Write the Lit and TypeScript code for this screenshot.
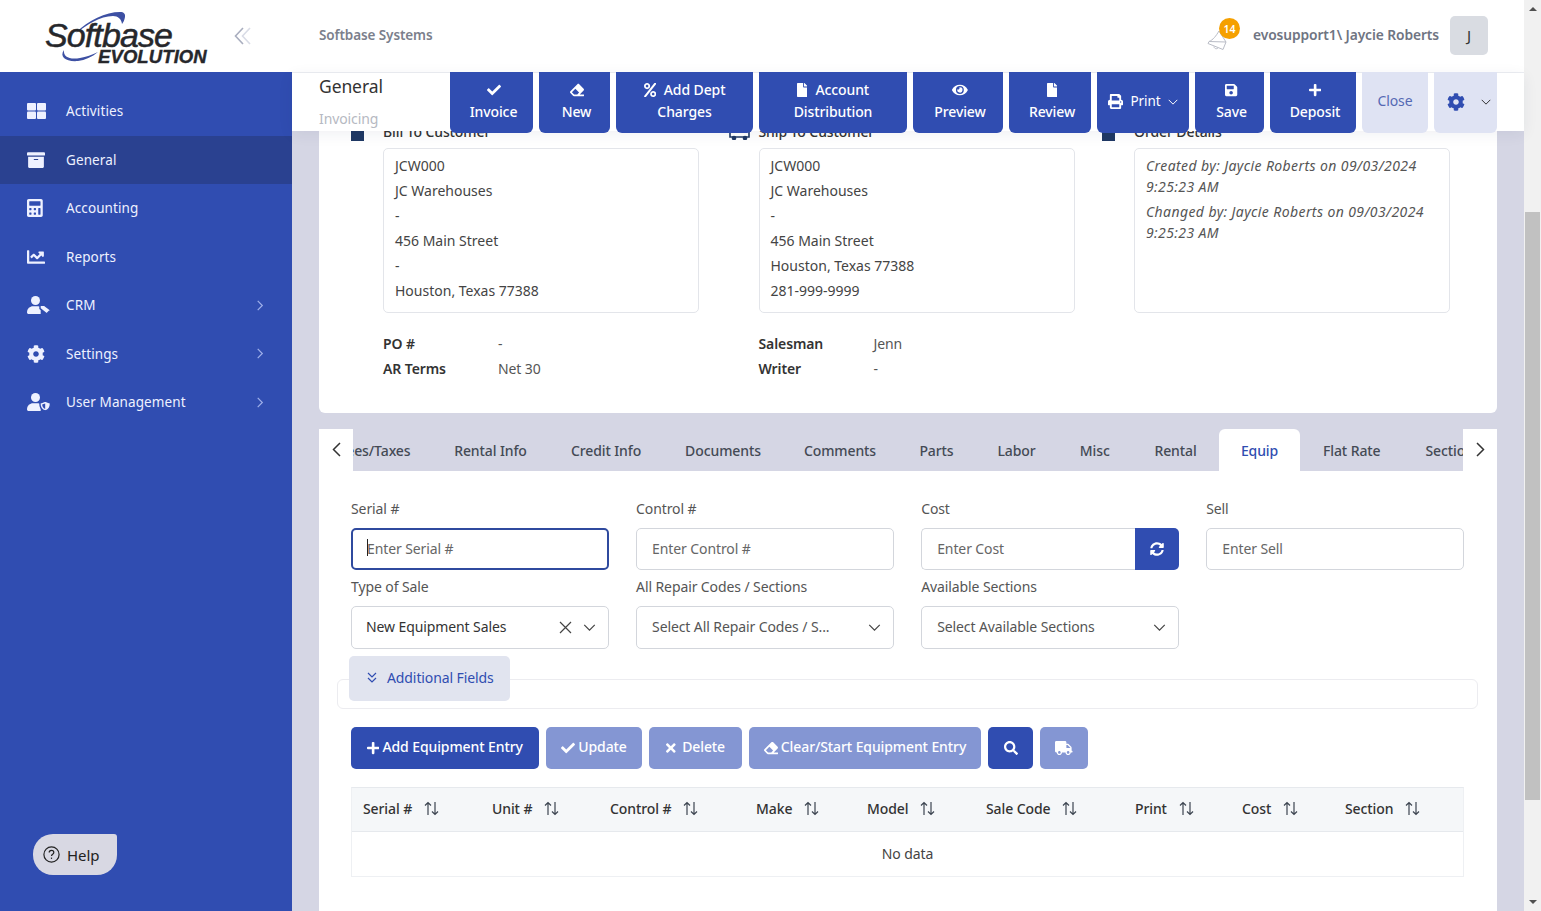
import { LitElement, html, css, svg } from "lit";
import { customElement } from "lit/decorators.js";

const fa = (w: number, d: string, cls = "") =>
  html`<svg class="fa ${cls}" viewBox="0 0 ${w} 512" fill="currentColor"><path d=${d}></path></svg>`;

const P = {
  check: "M173.898 439.404l-166.4-166.4c-9.997-9.997-9.997-26.206 0-36.204l36.203-36.204c9.997-9.998 26.207-9.998 36.204 0L192 312.69 432.095 72.596c9.997-9.997 26.207-9.997 36.204 0l36.203 36.204c9.997 9.997 9.997 26.206 0 36.204l-294.4 294.401c-9.998 9.997-26.207 9.997-36.204-.001z",
  plus: "M416 208H272V64c0-17.67-14.33-32-32-32h-32c-17.67 0-32 14.33-32 32v144H32c-17.67 0-32 14.33-32 32v32c0 17.67 14.33 32 32 32h144v144c0 17.67 14.33 32 32 32h32c17.67 0 32-14.33 32-32V304h144c17.67 0 32-14.33 32-32v-32c0-17.67-14.33-32-32-32z",
  times: "M242.72 256l100.07-100.07c12.28-12.28 12.28-32.19 0-44.48l-22.24-22.24c-12.28-12.28-32.19-12.28-44.48 0L176 189.28 75.93 89.21c-12.28-12.28-32.19-12.28-44.48 0L9.21 111.45c-12.28 12.28-12.28 32.19 0 44.48L109.28 256 9.21 356.07c-12.28 12.28-12.28 32.19 0 44.48l22.24 22.24c12.28 12.28 32.2 12.28 44.48 0L176 322.72l100.07 100.07c12.28 12.28 32.2 12.28 44.48 0l22.24-22.24c12.28-12.28 12.28-32.19 0-44.48L242.72 256z",
  search: "M505 442.7L405.3 343c-4.5-4.5-10.6-7-17-7H372c27.6-35.3 44-79.7 44-128C416 93.1 322.9 0 208 0S0 93.1 0 208s93.1 208 208 208c48.3 0 92.7-16.4 128-44v16.3c0 6.4 2.5 12.5 7 17l99.7 99.7c9.4 9.4 24.6 9.4 33.9 0l28.3-28.3c9.4-9.4 9.4-24.6.1-34zM208 336c-70.7 0-128-57.2-128-128 0-70.7 57.2-128 128-128 70.7 0 128 57.2 128 128 0 70.7-57.2 128-128 128z",
  file: "M224 136V0H24C10.7 0 0 10.7 0 24v464c0 13.3 10.7 24 24 24h336c13.3 0 24-10.7 24-24V160H248c-13.2 0-24-10.8-24-24zm160-14.1v6.1H256V0h6.1c6.4 0 12.5 2.5 17 7l97.9 98c4.5 4.5 7 10.6 7 16.9z",
  eye: "M572.52 241.4C518.29 135.59 410.93 64 288 64S57.68 135.64 3.48 241.41a32.35 32.35 0 0 0 0 29.19C57.71 376.41 165.07 448 288 448s230.32-71.64 284.52-177.41a32.35 32.35 0 0 0 0-29.19zM288 400a144 144 0 1 1 144-144 143.93 143.93 0 0 1-144 144zm0-240a95.31 95.31 0 0 0-25.31 3.79 47.85 47.85 0 0 1-66.9 66.9A95.78 95.78 0 1 0 288 160z",
  save: "M433.941 129.941l-83.882-83.882A48 48 0 0 0 316.118 32H48C21.49 32 0 53.49 0 80v352c0 26.51 21.49 48 48 48h352c26.51 0 48-21.49 48-48V163.882a48 48 0 0 0-14.059-33.941zM224 416c-35.346 0-64-28.654-64-64 0-35.346 28.654-64 64-64s64 28.654 64 64c0 35.346-28.654 64-64 64zm96-304.52V212c0 6.627-5.373 12-12 12H76c-6.627 0-12-5.373-12-12V108c0-6.627 5.373-12 12-12h228.52c3.183 0 6.235 1.264 8.485 3.515l3.48 3.48A11.996 11.996 0 0 1 320 111.48z",
  print: "M448 192V77.25c0-8.49-3.37-16.62-9.37-22.63L393.37 9.37c-6-6-14.14-9.37-22.63-9.37H96C78.33 0 64 14.33 64 32v160c-35.35 0-64 28.65-64 64v112c0 8.84 7.16 16 16 16h48v96c0 17.67 14.33 32 32 32h320c17.67 0 32-14.33 32-32v-96h48c8.84 0 16-7.16 16-16V256c0-35.35-28.65-64-64-64zm-64 256H128v-96h256v96zm0-224H128V64h192v48c0 8.84 7.16 16 16 16h48v96zm48 72c-13.25 0-24-10.75-24-24 0-13.26 10.75-24 24-24s24 10.74 24 24c0 13.25-10.75 24-24 24z",
  cog: "M487.4 315.7l-42.6-24.6c4.3-23.2 4.3-47 0-70.2l42.6-24.6c4.9-2.8 7.1-8.6 5.5-14-11.1-35.6-30-67.8-54.7-94.6-3.8-4.1-10-5.1-14.8-2.3L380.8 110c-17.9-15.4-38.5-27.3-60.8-35.1V25.8c0-5.6-3.9-10.5-9.4-11.7-36.7-8.2-74.3-7.8-109.2 0-5.5 1.2-9.4 6.1-9.4 11.7V75c-22.2 7.9-42.8 19.8-60.8 35.1L88.7 85.5c-4.9-2.8-11-1.9-14.8 2.3-24.7 26.7-43.6 58.9-54.7 94.6-1.7 5.4.6 11.2 5.5 14L67.3 221c-4.3 23.2-4.3 47 0 70.2l-42.6 24.6c-4.9 2.8-7.1 8.6-5.5 14 11.1 35.6 30 67.8 54.7 94.6 3.8 4.1 10 5.1 14.8 2.3l42.6-24.6c17.9 15.4 38.5 27.3 60.8 35.1v49.2c0 5.6 3.9 10.5 9.4 11.7 36.7 8.2 74.3 7.8 109.2 0 5.5-1.2 9.4-6.1 9.4-11.7v-49.2c22.2-7.9 42.8-19.8 60.8-35.1l42.6 24.6c4.9 2.8 11 1.9 14.8-2.3 24.7-26.7 43.6-58.9 54.7-94.6 1.5-5.5-.7-11.3-5.6-14.1zM256 336c-44.1 0-80-35.9-80-80s35.9-80 80-80 80 35.9 80 80-35.9 80-80 80z",
  eraser: "M497.941 273.941c18.745-18.745 18.745-49.137 0-67.882l-160-160c-18.745-18.745-49.136-18.746-67.883 0l-256 256c-18.745 18.745-18.745 49.137 0 67.882l96 96A48.004 48.004 0 0 0 144 480h356c6.627 0 12-5.373 12-12v-40c0-6.627-5.373-12-12-12H355.883l142.058-142.059zm-302.627-62.627l137.373 137.373L265.373 416H150.628l-80-80 124.686-124.686z",
  sync: "M370.72 133.28C339.458 104.008 298.888 87.962 255.848 88c-77.458.068-144.328 53.178-162.791 126.85-1.344 5.363-6.122 9.15-11.651 9.15H24.103c-7.498 0-13.194-6.807-11.807-14.176C33.933 94.924 134.813 8 256 8c66.448 0 126.791 26.136 171.315 68.685L463.03 40.97C478.149 25.851 504 36.559 504 57.941V192c0 13.255-10.745 24-24 24H345.941c-21.382 0-32.09-25.851-16.971-40.971l41.75-41.749zM32 296h134.059c21.382 0 32.09 25.851 16.971 40.971l-41.75 41.75c31.262 29.273 71.835 45.319 114.876 45.28 77.418-.07 144.315-53.144 162.787-126.849 1.344-5.363 6.122-9.15 11.651-9.15h57.304c7.498 0 13.194 6.807 11.807 14.176C478.067 417.076 377.187 504 256 504c-66.448 0-126.791-26.136-171.315-68.685L48.97 471.03C33.851 486.149 8 475.441 8 454.059V320c0-13.255 10.745-24 24-24z",
  percent: "M112 224c61.9 0 112-50.1 112-112S173.9 0 112 0 0 50.1 0 112s50.1 112 112 112zm0-160c26.5 0 48 21.5 48 48s-21.5 48-48 48-48-21.5-48-48 21.5-48 48-48zm224 224c-61.9 0-112 50.1-112 112s50.1 112 112 112 112-50.1 112-112-50.1-112-112-112zm0 160c-26.5 0-48-21.5-48-48s21.5-48 48-48 48 21.5 48 48-21.5 48-48 48zM392.3.2l31.6.1c19.4.1 30.8 21.8 19.7 37.8L77.4 501.6a23.95 23.95 0 0 1-19.6 10.2l-33.4-.1c-19.5 0-30.9-21.9-19.7-37.8l368-463.7C377.2 4 384.5.2 392.3.2z",
  truck: "M624 352h-16V243.9c0-12.7-5.1-24.9-14.1-33.9L494 110.1c-9-9-21.2-14.1-33.9-14.1H416V48c0-26.5-21.5-48-48-48H48C21.5 0 0 21.5 0 48v320c0 26.5 21.5 48 48 48h16c0 53 43 96 96 96s96-43 96-96h128c0 53 43 96 96 96s96-43 96-96h48c8.8 0 16-7.2 16-16v-32c0-8.8-7.2-16-16-16zM160 464c-26.5 0-48-21.5-48-48s21.5-48 48-48 48 21.5 48 48-21.5 48-48 48zm320 0c-26.5 0-48-21.5-48-48s21.5-48 48-48 48 21.5 48 48-21.5 48-48 48zm80-208H416V144h44.1l99.9 99.9V256z",
  archive: "M32 448c0 17.7 14.3 32 32 32h384c17.7 0 32-14.3 32-32V160H32v288zm160-212c0-6.6 5.4-12 12-12h104c6.6 0 12 5.4 12 12v8c0 6.6-5.4 12-12 12H204c-6.6 0-12-5.4-12-12v-8zM480 32H32C14.3 32 0 46.3 0 64v48c0 8.8 7.2 16 16 16h480c8.8 0 16-7.2 16-16V64c0-17.7-14.3-32-32-32z",
  calc: "M400 0H48C22.4 0 0 22.4 0 48v416c0 25.6 22.4 48 48 48h352c25.6 0 48-22.4 48-48V48c0-25.6-22.4-48-48-48zM128 435.2c0 6.4-6.4 12.8-12.8 12.8H76.8c-6.4 0-12.8-6.4-12.8-12.8v-38.4c0-6.4 6.4-12.8 12.8-12.8h38.4c6.4 0 12.8 6.4 12.8 12.8v38.4zm0-128c0 6.4-6.4 12.8-12.8 12.8H76.8c-6.4 0-12.8-6.4-12.8-12.8v-38.4c0-6.4 6.4-12.8 12.8-12.8h38.4c6.4 0 12.8 6.4 12.8 12.8v38.4zm128 128c0 6.4-6.4 12.8-12.8 12.8h-38.4c-6.4 0-12.8-6.4-12.8-12.8v-38.4c0-6.4 6.4-12.8 12.8-12.8h38.4c6.4 0 12.8 6.4 12.8 12.8v38.4zm0-128c0 6.4-6.4 12.8-12.8 12.8h-38.4c-6.4 0-12.8-6.4-12.8-12.8v-38.4c0-6.4 6.4-12.8 12.8-12.8h38.4c6.4 0 12.8 6.4 12.8 12.8v38.4zm128 128c0 6.4-6.4 12.8-12.8 12.8h-38.4c-6.4 0-12.8-6.4-12.8-12.8V268.8c0-6.4 6.4-12.8 12.8-12.8h38.4c6.4 0 12.8 6.4 12.8 12.8v166.4zm0-256c0 6.4-6.4 12.8-12.8 12.8H76.8c-6.4 0-12.8-6.4-12.8-12.8V76.8C64 70.4 70.4 64 76.8 64h294.4c6.4 0 12.8 6.4 12.8 12.8v102.4z",
  chart: "M496 384H64V80c0-8.84-7.16-16-16-16H16C7.16 64 0 71.16 0 80v336c0 17.67 14.33 32 32 32h464c8.84 0 16-7.16 16-16v-32c0-8.84-7.16-16-16-16zM464 96H345.94c-21.38 0-32.09 25.85-16.97 40.97l32.4 32.4L288 242.75l-73.37-73.37c-12.5-12.5-32.76-12.5-45.25 0l-68.69 68.69c-6.25 6.25-6.25 16.38 0 22.63l22.62 22.62c6.25 6.25 16.38 6.25 22.63 0L192 237.25l73.37 73.37c12.5 12.5 32.76 12.5 45.25 0l96-96 32.4 32.4c15.12 15.12 40.97 4.41 40.97-16.97V112c.01-8.84-7.15-16-15.99-16z",
};

const gridIcon = html`<svg class="nav-ic grid" viewBox="0 0 19 16" fill="currentColor"><rect x="0" y="0" width="9" height="7.4" rx="1"></rect><rect x="10" y="0" width="9" height="7.4" rx="1"></rect><rect x="0" y="8.6" width="9" height="7.4" rx="1"></rect><rect x="10" y="8.6" width="9" height="7.4" rx="1"></rect></svg>`;

const person = svg`<circle cx="8.5" cy="4.5" r="4.5"></circle><path d="M0 16.5C0 12.5 3 10.3 6 10.3h5c1 0 2 .3 2.7.7V18H1.700C.7 18 0 17.4 0 16.5z"></path>`;
const userTag = html`<svg class="nav-ic" viewBox="0 0 24 18" fill="currentColor">${person}<path d="M13 9.200h4.200l6.300 4.800-3.900 3.900-6.600-5.300z" stroke="#304db1" stroke-width="1.400"></path></svg>`;
const userShield = html`<svg class="nav-ic" viewBox="0 0 24 18" fill="currentColor">${person}<path d="M18.200 8.200l5.300 2c0 4-1.500 6.800-5.300 7.800-3.800-1-5.300-3.800-5.300-7.800z" stroke="#304db1" stroke-width="1.400"></path><path d="M18.200 10.500v5.600c-2-.8-2.900-2.600-3-4.500z" fill="#304db1"></path></svg>`;

const chevR = html`<svg class="caret" viewBox="0 0 8 12" fill="none" stroke="currentColor" stroke-width="1.3"><path d="M1.500 1l5 5-5 5"></path></svg>`;
const chevD = html`<svg class="chev" viewBox="0 0 14 8" fill="none" stroke="currentColor" stroke-width="1.400"><path d="M1 1l6 6 6-6"></path></svg>`;
const sort = html`<svg class="sort" viewBox="0 0 15 15" fill="none" stroke="currentColor" stroke-width="1.200"><path d="M4 14V1.500M1 4.500l3-3 3 3M11 1v12.500M8 10.500l3 3 3-3"></path></svg>`;

const NAV = [
  { label: "Activities", icon: gridIcon },
  { label: "General", icon: fa(512, P.archive, "nav-ic"), active: true },
  { label: "Accounting", icon: fa(448, P.calc, "nav-ic") },
  { label: "Reports", icon: fa(512, P.chart, "nav-ic") },
  { label: "CRM", icon: userTag, more: true },
  { label: "Settings", icon: fa(512, P.cog, "nav-ic"), more: true },
  { label: "User Management", icon: userShield, more: true },
];

const TABS = ["Fees/Taxes", "Rental Info", "Credit Info", "Documents", "Comments", "Parts", "Labor", "Misc", "Rental", "Equip", "Flat Rate", "Sections"];
const COLS = ["Serial #", "Unit #", "Control #", "Make", "Model", "Sale Code", "Print", "Cost", "Section"];

@customElement("app-root")
export class AppRoot extends LitElement {
  static styles = css`
    :host {
      display: block;
      height: 911px;
      overflow: hidden;
      font-family: "Noto Sans", sans-serif;
      font-size: 14px;
      color: #333;
      letter-spacing: -0.1px;
    }
    * { box-sizing: border-box; }
    .app {
      display: grid;
      grid-template-columns: 292px 1fr 17px;
      height: 100%;
      background: #d5d6e4;
    }
    .fa { height: 14px; width: auto; display: block; flex: none; }

    /* sidebar */
    .side {
      background: #304db1;
      display: flex;
      flex-direction: column;
      color: #eef1ff;
    }
    .brand {
      height: 72px;
      background: #fff;
      position: relative;
      flex: none;
    }
    .logo-a {
      position: absolute;
      left: 45px;
      top: 15px;
      font: italic 34px/40px "Liberation Sans", sans-serif;
      letter-spacing: -0.9px;
      color: #26272b;
      -webkit-text-stroke: 0.5px #26272b;
    }
    .logo-b {
      position: absolute;
      left: 98px;
      top: 46px;
      font: italic bold 18.5px/22px "Liberation Sans", sans-serif;
      letter-spacing: 0.1px;
      color: #26272b;
      -webkit-text-stroke: 0.4px #26272b;
    }
    .swoosh { position: absolute; left: 0; top: 0; width: 230px; height: 72px; }
    .collapse {
      position: absolute;
      left: 234px;
      top: 27px;
      width: 20px;
      height: 18px;
    }
    .nav { padding-top: 15px; display: flex; flex-direction: column; }
    .nav a {
      height: 48.500px;
      display: flex;
      align-items: center;
      padding: 0 27px;
    }
    .nav a.active { background: #2a4190; }
    .nav-slot { width: 39px; flex: none; display: flex; align-items: center; }
    .nav-ic { height: 18px; width: auto; display: block; max-width: 24px; }
    .nav-ic.grid { height: 16px; }
    .nav a span { flex: 1; font-size: 13.500px; letter-spacing: 0.1px; }
    .caret { width: 8px; height: 11px; color: #9fb0ea; margin-right: 1px; }
    .help-wrap { margin-top: auto; padding: 0 0 36px 33px; }
    .help {
      width: 84px;
      height: 41px;
      background: #d8d8e3;
      border-radius: 20px 3px 20px 20px;
      display: flex;
      align-items: center;
      gap: 7px;
      padding-left: 10px;
      color: #222;
      font-size: 15px;
    }
    .help svg { width: 17px; height: 17px; }

    /* main column */
    .main { display: flex; flex-direction: column; min-width: 0; height: 911px; }
    .top {
      height: 73px;
      flex: none;
      background: #fff;
      border-bottom: 1px solid #eceef2;
      display: flex;
      align-items: center;
      padding: 0 36px 2px 27px;
    }
    .org { font-weight: 600; color: #7b808c; font-size: 13.500px; flex: 1; }
    .bell { position: relative; width: 34px; height: 30px; margin-right: 12px; }
    .bell svg { position: absolute; left: 0; top: 6px; width: 20px; height: 24px; }
    .badge {
      position: absolute;
      left: 12px;
      top: -2px;
      width: 21px;
      height: 21px;
      border-radius: 50%;
      background: #f5a000;
      color: #fff;
      font-size: 10.500px;
      font-weight: 600;
      display: flex;
      align-items: center;
      justify-content: center;
    }
    .who { font-weight: 600; color: #6f7482; font-size: 13.800px; margin: 0 11px 2px 0; }
    .avatar {
      width: 38px;
      height: 39px;
      background: #d9dce2;
      border-radius: 5px;
      display: flex;
      align-items: center;
      justify-content: center;
      font-size: 15px;
    }
    .bar {
      height: 58px;
      flex: none;
      background: #fff;
      padding: 0 27px;
      display: flex;
      position: relative;
      z-index: 2;
      box-shadow: 0 3px 14px rgba(30, 40, 90, 0.07);
    }
    .crumbs { flex: 1; padding-top: 0; }
    .crumbs b { display: block; font-weight: 400; font-size: 17.500px; line-height: 26px; color: #333; }
    .crumbs small { display: block; font-size: 14px; line-height: 20px; margin-top: 10px; color: #b6b9c2; }
    .actions {
      display: grid;
      grid-template-columns: 83px 71px 137px 148px 90px 82px 92px 69px 86px 66px 63px;
      column-gap: 6px;
      height: 61px;
      margin-top: -1px;
    }
    .act {
      background: #304db1;
      color: #fff;
      border-radius: 0 0 6px 6px;
      font-weight: 500;
      display: flex;
      flex-direction: column;
      align-items: center;
      justify-content: center;
      gap: 7px;
      line-height: 15px;
      white-space: nowrap;
      padding-bottom: 4px;
    }
    .act.stack { padding-left: 4px; }
    .act .ln { display: flex; align-items: center; gap: 8px; }
    .act.row { flex-direction: row; gap: 8px; font-weight: 400; font-size: 13.500px; padding-bottom: 2px; }
    .act.row .chev { width: 10px; height: 6px; }
    .act.row .fa { height: 15px; }
    .act.light { background: #dfe3f3; color: #5569b3; font-weight: 400; }
    .act.gear { flex-direction: row; gap: 16px; color: #304db1; padding: 0 0 2px 6px; }
    .act.gear .fa { height: 18px; }
    .act.gear .chev { width: 10px; height: 6px; color: #333; }

    /* scrolled content */
    .view { flex: 1; overflow: hidden; min-height: 0; padding: 0 27px; }
    .scrolled { margin-top: -31px; }
    .card {
      background: #fff;
      border-radius: 6px;
      padding: 22px 0 31px;
      height: 313px;
    }
    .addr { display: grid; grid-template-columns: repeat(3, 375.500px); padding-left: 32px; }
    .addr-col { display: grid; grid-template-columns: 32px 316px; row-gap: 6px; align-items: center; }
    .addr-col h4 { margin: 0; font-size: 14px; line-height: 20px; font-weight: 500; color: #333; }
    .sq { width: 13px; height: 14px; background: #1f3864; margin-top: 3px; }
    .truck { width: 21px; height: 14px; margin: 2px 0 0 2px; color: #1f3864; display: block; }
    .box {
      grid-column: 2;
      height: 165px;
      border: 1px solid #e3e5ea;
      border-radius: 5px;
      padding: 4px 11px;
      line-height: 25px;
      color: #444;
      letter-spacing: 0;
    }
    .box.it { font-style: italic; line-height: 21px; padding-top: 6px; color: #555; letter-spacing: 0.4px; }
    .box.it p { margin: 0 0 4px; }
    .meta { display: grid; grid-template-columns: repeat(2, 375.500px); padding: 18px 0 0 64px; line-height: 25px; }
    .meta div { display: grid; grid-template-columns: 115px 1fr; }
    .meta b { font-weight: 600; color: #333; }
    .meta span { color: #555; }

    .tabs { display: flex; height: 42px; margin-top: 16px; }
    .arrow {
      width: 34px;
      flex: none;
      background: #fff;
      color: #333;
      display: flex;
      align-items: center;
      justify-content: center;
    }
    .arrow svg { width: 9px; height: 15px; margin-top: -2px; }
    .strip {
      flex: 1;
      min-width: 0;
      overflow: hidden;
      display: grid;
      grid-template-columns: 79.500px 116px 115px 119px 115px 78px 82px 74.500px 87px 81px 103.500px 90px;
    }
    .tab {
      display: flex;
      align-items: center;
      justify-content: center;
      font-weight: 500;
      color: #444a55;
      white-space: nowrap;
    }
    .tab.first { justify-content: flex-end; padding-right: 22px; }
    .tab.last { justify-content: flex-start; padding-left: 22px; }
    .tab.on { background: #fff; color: #304db1; border-radius: 6px 6px 0 0; }

    .panel { background: #fff; padding: 27px 33px 40px 32px; }
    .form { display: grid; grid-template-columns: repeat(4, 1fr); column-gap: 27.300px; row-gap: 6px; }
    .field label { display: block; line-height: 21px; margin-bottom: 9px; color: #555; font-size: 14px; white-space: nowrap; }
    .ctl {
      height: 42px;
      width: 100%;
      border: 1px solid #d3d6dc;
      border-radius: 5px;
      background: #fff;
      padding: 0 15px 2px;
      font: inherit;
      letter-spacing: inherit;
      color: #555;
      outline: none;
    }
    .ctl::placeholder { color: #666; opacity: 1; }
    .focus { position: relative; }
    .focus .ctl { border: 2px solid #2f4a9e; padding: 0 14px 2px; }
    .focus::after {
      content: "";
      position: absolute;
      left: 16px;
      top: 41px;
      width: 1px;
      height: 17px;
      background: #222;
    }
    .group { display: flex; }
    .group .ctl { border-radius: 5px 0 0 5px; border-right: 0; flex: 1; min-width: 0; }
    .group button {
      width: 44px;
      flex: none;
      border: 0;
      background: #304db1;
      color: #fff;
      border-radius: 0 5px 5px 0;
      display: flex;
      align-items: center;
      justify-content: center;
    }
    .sel {
      height: 43px;
      display: flex;
      align-items: center;
      border: 1px solid #d3d6dc;
      border-radius: 5px;
      padding: 0 12px 0 15px;
      color: #555;
      white-space: nowrap;
    }
    .sel span { flex: 1; overflow: hidden; padding-bottom: 2px; }
    .sel.val { padding-left: 14px; }
    .sel.val span { color: #333; }
    .sel .chev { width: 13px; height: 7px; color: #444; }
    .sel .x { width: 13px; height: 13px; margin-right: 11px; color: #444; }

    .extra {
      position: relative;
      height: 30px;
      margin: 30px -14px 0 -14px;
      border: 1px solid #ececf0;
      border-radius: 6px;
    }
    .extra-btn {
      position: absolute;
      left: 11px;
      top: -24px;
      width: 161px;
      height: 45px;
      background: #e1e4ef;
      border-radius: 5px;
      color: #304db1;
      display: flex;
      align-items: center;
      gap: 10px;
      padding: 0 0 2px 18px;
      font-size: 14px;
    }
    .extra-btn svg { width: 10px; height: 11px; }
    .btns { display: flex; gap: 7px; margin-top: 18px; height: 42px; }
    .btn {
      background: #304db1;
      color: #fff;
      border-radius: 5px;
      display: flex;
      align-items: center;
      justify-content: center;
      gap: 3px;
      font-weight: 500;
      white-space: nowrap;
      line-height: 20px;
    }
    .btn span { margin-top: -3px; }
    .btn.off { background: #8496d3; }
    .w1 { width: 188px; } .w2 { width: 96px; } .w3 { width: 93px; } .w4 { width: 232px; } .w5 { width: 45px; } .w6 { width: 48px; }
    .table { margin-top: 18px; border: 1px solid #eef0f3; border-top-color: #e6e9ed; }
    .thead {
      display: grid;
      grid-template-columns: 129px 118px 146px 111px 119px 149px 107px 103px 1fr;
      height: 44px;
      background: #f5f7f9;
      border-bottom: 1px solid #e6e9ed;
    }
    .th { display: flex; align-items: center; gap: 12px; padding: 0 0 2px 11px; font-weight: 500; color: #333; white-space: nowrap; }
    .sort { width: 15px; height: 15px; color: #3c4450; }
    .empty { height: 44px; display: flex; align-items: center; justify-content: center; color: #444; padding-bottom: 2px; }

    /* window scrollbar */
    .sb { background: #f1f1f1; display: flex; flex-direction: column; align-items: center; height: 911px; }
    .sb i { display: block; width: 0; height: 0; border-left: 4px solid transparent; border-right: 4px solid transparent; }
    .sb .up { border-bottom: 4px solid #505050; margin-top: 7px; }
    .sb .thumb { width: 15px; height: 588px; background: #c1c1c1; margin-top: 201px; }
    .sb .dn { border-top: 4px solid #505050; margin-top: auto; margin-bottom: 7px; }
  `;

  private renderSide() {
    return html`<aside class="side">
      <div class="brand">
        <svg class="swoosh" viewBox="0 0 230 72">
          <path d="M76 33C88 20 106 12 120 12c4 0 5.500 2 5 5-.5 3-1.500 5-3 7-.5-5-4-8-9-8-13 0-26 9-37 17z" fill="#3d50a3"></path>
          <path d="M64 50c-1 7 6 10 16 8 6-1 12-3 18-6-6 5-13 8-20 9-12 1-19-4-14-11z" fill="#3d50a3"></path>
        </svg>
        <div class="logo-a">Softbase</div>
        <div class="logo-b">EVOLUTION</div>
        <svg class="collapse" viewBox="0 0 20 18" fill="none" stroke-width="1.600">
          <path d="M9 1L1.500 9 9 17" stroke="#a9aebf"></path>
          <path d="M16 1L8.500 9 16 17" stroke="#d9dce6"></path>
        </svg>
      </div>
      <nav class="nav">
        ${NAV.map(
          (n) => html`<a class=${n.active ? "active" : ""}>
            <div class="nav-slot">${n.icon}</div>
            <span>${n.label}</span>
            ${n.more ? chevR : ""}
          </a>`,
        )}
      </nav>
      <div class="help-wrap">
        <div class="help">
          <svg viewBox="0 0 17 17" fill="none" stroke="#222" stroke-width="1.200"><circle cx="8.500" cy="8.500" r="7.600"></circle><path d="M6.200 6.600c0-1.400 1-2.200 2.300-2.200s2.300.8 2.300 2c0 1.900-2.300 1.900-2.300 3.700"></path><path d="M8.500 11.600v1.300"></path></svg>
          Help
        </div>
      </div>
    </aside>`;
  }

  private renderBar() {
    return html`<div class="bar">
      <div class="crumbs"><b>General</b><small>Invoicing</small></div>
      <div class="actions">
        <div class="act stack">${fa(512, P.check)}<span>Invoice</span></div>
        <div class="act stack">${fa(512, P.eraser)}<span>New</span></div>
        <div class="act"><div class="ln">${fa(448, P.percent)}<span>Add Dept</span></div><span>Charges</span></div>
        <div class="act"><div class="ln">${fa(384, P.file)}<span>Account</span></div><span>Distribution</span></div>
        <div class="act stack">${fa(576, P.eye)}<span>Preview</span></div>
        <div class="act stack">${fa(384, P.file)}<span>Review</span></div>
        <div class="act row">${fa(512, P.print)}<span>Print</span>${chevD}</div>
        <div class="act stack">${fa(448, P.save)}<span>Save</span></div>
        <div class="act stack">${fa(448, P.plus)}<span>Deposit</span></div>
        <div class="act light">Close</div>
        <div class="act light gear">${fa(512, P.cog)}${chevD}</div>
      </div>
    </div>`;
  }

  private renderSummary() {
    return html`<section class="card">
      <div class="addr">
        <div class="addr-col">
          <div class="sq"></div><h4>Bill To Customer</h4>
          <div class="box">JCW000<br />JC Warehouses<br />-<br />456 Main Street<br />-<br />Houston, Texas 77388</div>
        </div>
        <div class="addr-col">
          <svg class="truck" viewBox="0 0 21 14" fill="none" stroke="currentColor" stroke-width="1.600"><path d="M1 1v10h19V5l-3-4"></path><circle cx="5" cy="12" r="1.500" fill="currentColor"></circle><circle cx="16" cy="12" r="1.500" fill="currentColor"></circle></svg>
          <h4>Ship To Customer</h4>
          <div class="box">JCW000<br />JC Warehouses<br />-<br />456 Main Street<br />Houston, Texas 77388<br />281-999-9999</div>
        </div>
        <div class="addr-col">
          <div class="sq"></div><h4>Order Details</h4>
          <div class="box it">
            <p>Created by: Jaycie Roberts on 09/03/2024 9:25:23 AM</p>
            <p>Changed by: Jaycie Roberts on 09/03/2024 9:25:23 AM</p>
          </div>
        </div>
      </div>
      <div class="meta">
        <div><b>PO #</b><span>-</span></div>
        <div><b>Salesman</b><span>Jenn</span></div>
        <div><b>AR Terms</b><span>Net 30</span></div>
        <div><b>Writer</b><span>-</span></div>
      </div>
    </section>`;
  }

  private renderPanel() {
    return html`<section class="panel">
      <div class="form">
        <div class="field focus"><label>Serial #</label><input class="ctl" placeholder="Enter Serial #" /></div>
        <div class="field"><label>Control #</label><input class="ctl" placeholder="Enter Control #" /></div>
        <div class="field">
          <label>Cost</label>
          <div class="group"><input class="ctl" placeholder="Enter Cost" /><button>${fa(512, P.sync)}</button></div>
        </div>
        <div class="field"><label>Sell</label><input class="ctl" placeholder="Enter Sell" /></div>
        <div class="field">
          <label>Type of Sale</label>
          <div class="sel val">
            <span>New Equipment Sales</span>
            <svg class="x" viewBox="0 0 13 13" fill="none" stroke="currentColor" stroke-width="1.200"><path d="M1 1l11 11M12 1L1 12"></path></svg>
            ${chevD}
          </div>
        </div>
        <div class="field"><label>All Repair Codes / Sections</label><div class="sel"><span>Select All Repair Codes / S...</span>${chevD}</div></div>
        <div class="field"><label>Available Sections</label><div class="sel"><span>Select Available Sections</span>${chevD}</div></div>
      </div>
      <div class="extra">
        <div class="extra-btn">
          <svg viewBox="0 0 10 11" fill="none" stroke="currentColor" stroke-width="1.200"><path d="M1 1l4 4 4-4M1 6l4 4 4-4"></path></svg>
          Additional Fields
        </div>
      </div>
      <div class="btns">
        <div class="btn w1">${fa(448, P.plus)}<span>Add Equipment Entry</span></div>
        <div class="btn off w2">${fa(512, P.check)}<span>Update</span></div>
        <div class="btn off w3">${fa(352, P.times)}<span>&nbsp;Delete</span></div>
        <div class="btn off w4">${fa(512, P.eraser)}<span>Clear/Start Equipment Entry</span></div>
        <div class="btn w5">${fa(512, P.search)}</div>
        <div class="btn off w6">${fa(640, P.truck)}</div>
      </div>
      <div class="table">
        <div class="thead">${COLS.map((c) => html`<div class="th">${c}${sort}</div>`)}</div>
        <div class="empty">No data</div>
      </div>
    </section>`;
  }

  render() {
    return html`<div class="app">
      ${this.renderSide()}
      <div class="main">
        <header class="top">
          <div class="org">Softbase Systems</div>
          <div class="bell">
            <svg viewBox="0 0 20 24" fill="none" stroke="#b9bcc6" stroke-width="1"><path d="M2 15.500C6 14 9 10 12 5l7 11z"></path><path d="M2 15.500l-1 2 15 6 3-7.500"></path><path d="M7 20.500c0 2 2.500 3 4 1.500"></path></svg>
            <div class="badge">14</div>
          </div>
          <div class="who">evosupport1\\ Jaycie Roberts</div>
          <div class="avatar">J</div>
        </header>
        ${this.renderBar()}
        <div class="view">
          <div class="scrolled">
            ${this.renderSummary()}
            <div class="tabs">
              <div class="arrow"><svg viewBox="0 0 9 15" fill="none" stroke="currentColor" stroke-width="1.500"><path d="M8 1L1.500 7.500 8 14"></path></svg></div>
              <div class="strip">
                ${TABS.map(
                  (t, i) => html`<div class="tab ${i === 0 ? "first" : ""} ${i === TABS.length - 1 ? "last" : ""} ${t === "Equip" ? "on" : ""}">${t}</div>`,
                )}
              </div>
              <div class="arrow"><svg viewBox="0 0 9 15" fill="none" stroke="currentColor" stroke-width="1.500"><path d="M1 1l6.500 6.500L1 14"></path></svg></div>
            </div>
            ${this.renderPanel()}
          </div>
        </div>
      </div>
      <div class="sb"><i class="up"></i><div class="thumb"></div><i class="dn"></i></div>
    </div>`;
  }
}
